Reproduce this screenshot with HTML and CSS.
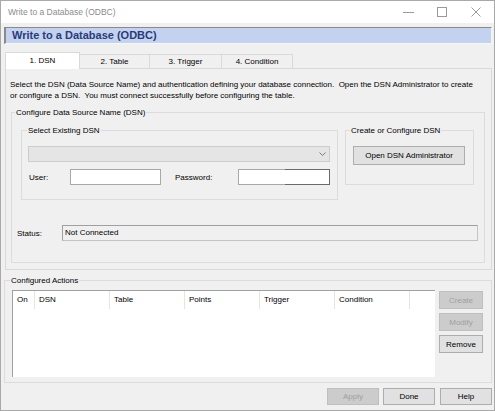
FILE: index.html
```html
<!DOCTYPE html>
<html lang="en">
<head>
<meta charset="utf-8">
<title>Write to a Database (ODBC)</title>
<link rel="stylesheet" href="styles.css">
</head>
<body>
<div class="window">
  <div class="titlebar">
    <span class="title">Write to a Database (ODBC)</span>
    <div class="controls">
      <span class="ctl"><svg width="11" height="11" viewBox="0 0 11 11"><path d="M0 5.5H11" stroke="#9a9a9a" stroke-width="1"/></svg></span>
      <span class="ctl"><svg width="10" height="10" viewBox="0 0 10 10"><rect x="0.5" y="0.5" width="9" height="9" fill="none" stroke="#9a9a9a" stroke-width="1"/></svg></span>
      <span class="ctl close"><svg width="10" height="10" viewBox="0 0 10 10"><path d="M0.5 0.5L9.5 9.5M9.5 0.5L0.5 9.5" stroke="#9a9a9a" stroke-width="1"/></svg></span>
    </div>
  </div>
  <div class="content">
    <div class="banner">Write to a Database (ODBC)</div>
    <div class="tabs">
      <div class="tab active t1">1. DSN</div>
      <div class="tab t2">2. Table</div>
      <div class="tab t3">3. Trigger</div>
      <div class="tab t4">4. Condition</div>
    </div>
    <div class="tabpage">
      <p class="desc">Select the DSN (Data Source Name) and authentication defining your database connection.&nbsp; Open the DSN Administrator to create<br>or configure a DSN.&nbsp; You must connect successfully before configuring the table.</p>
      <fieldset class="group dsn">
        <legend>Configure Data Source Name (DSN)</legend>
        <div class="groups">
          <fieldset class="group select">
            <legend>Select Existing DSN</legend>
            <div class="combo"><svg width="7" height="4" viewBox="0 0 7 4"><path d="M0.5 0.5L3.5 3.5L6.5 0.5" fill="none" stroke="#7a7a7a" stroke-width="1"/></svg></div>
            <div class="cred">
              <span class="lbl lbl-user">User:</span><span class="input user"></span>
              <span class="lbl lbl-pass">Password:</span><span class="input pass"></span>
            </div>
          </fieldset>
          <fieldset class="group create">
            <legend>Create or Configure DSN</legend>
            <button class="btn wide" type="button">Open DSN Administrator</button>
          </fieldset>
        </div>
        <div class="status-row">
          <span class="lbl lbl-status">Status:</span>
          <div class="status">Not Connected</div>
        </div>
      </fieldset>
    </div>
    <fieldset class="group actions">
      <legend>Configured Actions</legend>
      <div class="actions-body">
        <div class="list">
          <div class="list-head">
            <span class="col on">On</span>
            <span class="col">DSN</span>
            <span class="col">Table</span>
            <span class="col">Points</span>
            <span class="col">Trigger</span>
            <span class="col">Condition</span>
          </div>
        </div>
        <div class="side">
          <button class="btn small disabled" type="button">Create</button>
          <button class="btn small disabled" type="button">Modify</button>
          <button class="btn small" type="button">Remove</button>
        </div>
      </div>
    </fieldset>
    <div class="footer">
      <button class="btn foot disabled" type="button">Apply</button>
      <button class="btn foot" type="button">Done</button>
      <button class="btn foot help" type="button">Help</button>
    </div>
  </div>
</div>
</body>
</html>
```
FILE: styles.css
```css
* { box-sizing: border-box; }
html, body { margin: 0; padding: 0; }
body {
  width: 495px;
  height: 411px;
  overflow: hidden;
  background: #f0f0f0;
  font-family: "Liberation Sans", Arial, sans-serif;
  font-size: 8px;
  color: #000;
}
.window {
  width: 495px;
  height: 411px;
  border: 1px solid #a9a9a9;
  background: #f0f0f0;
  display: flex;
  flex-direction: column;
}
.titlebar {
  height: 22px;
  flex-shrink: 0;
  background: #fff;
  display: flex;
  justify-content: space-between;
  align-items: center;
}
.title {
  padding-left: 7px;
  font-size: 8.5px;
  line-height: 22px;
  color: #8c8c8c;
}
.controls { display: flex; height: 22px; }
.ctl {
  width: 33px;
  height: 22px;
  display: flex;
  align-items: center;
  justify-content: center;
}
.ctl.close { width: 36px; }
.content { padding: 4px 2px 0 3px; }
.banner {
  height: 17px;
  background: #c3d2ee;
  border-top: 1px solid #8a8a8a;
  border-left: 2px solid #8a8a8a;
  border-right: 1px solid #f4f7fc;
  border-bottom: 1px solid #f4f7fc;
  padding-left: 6px;
  font-weight: bold;
  font-size: 11px;
  line-height: 15px;
  color: #2b3a7a;
}
.tabs {
  display: flex;
  align-items: flex-end;
  margin: 8px 0 0 1px;
  height: 16px;
  position: relative;
  z-index: 1;
}
.tab {
  height: 14px;
  border: 1px solid #d9d9d9;
  border-bottom: none;
  background: #f0f0f0;
  text-align: center;
  line-height: 14px;
  margin-left: -1px;
}
.tab.t1 { width: 75px; margin-left: 0; }
.tab.t2 { width: 71px; }
.tab.t3 { width: 73px; }
.tab.t4 { width: 72px; }
.tab.active {
  height: 17px;
  margin-bottom: -1px;
  background: #fff;
  line-height: 15px;
  position: relative;
  z-index: 2;
}
.tabpage {
  margin-left: 1px;
  border: 1px solid #d9d9d9;
  background: #f0f0f0;
  padding: 10px 6px 6px 4px;
}
.desc {
  margin: 0;
  line-height: 11px;
  white-space: nowrap;
}
fieldset.group {
  margin: 0;
  min-width: 0;
  border: 1px solid #dcdcdc;
}
fieldset.group > legend {
  padding: 0 1px;
  line-height: 11px;
  font-size: 8px;
}
.dsn {
  margin: 6px 0 0 1px !important;
  padding: 7px 6px 21px 5px;
}
.dsn > legend { margin-left: -2px; }
.groups {
  display: flex;
  align-items: flex-start;
  gap: 7px;
  margin: 0 3px 0 4px;
}
.select {
  width: 317px;
  flex-shrink: 0;
  padding: 10px 7px 14px 6px;
}
.select > legend { margin-left: -1px; }
.create {
  width: 129px;
  flex-shrink: 0;
  padding: 10px 7px 19px 7px;
}
.create > legend { margin-left: -3px; }
.combo {
  height: 16px;
  background: #e5e5e5;
  border: 1px solid #cccccc;
  display: flex;
  align-items: center;
  justify-content: flex-end;
  padding-right: 3px;
}
.cred {
  display: flex;
  align-items: center;
  height: 16px;
  margin-top: 7px;
}
.lbl { line-height: 11px; }
.lbl-user { width: 41px; margin-left: 1px; }
.lbl-pass { width: 63px; margin-left: 14px; }
.input {
  height: 16px;
  background: #fff;
  border: 1px solid #a8a8a8;
}
.input.user { width: 91px; }
.input.pass { width: 92px; position: relative; }
.input.pass::after {
  content: "";
  position: absolute;
  top: -1px;
  right: -1px;
  bottom: -1px;
  width: 44px;
  border: 1px solid #6a6a6a;
  border-left: none;
}
.btn {
  font-family: "Liberation Sans", Arial, sans-serif;
  font-size: 8px;
  color: #000;
  background: #e1e1e1;
  border: 1px solid #adadad;
  padding: 0;
  margin: 0;
  border-radius: 0;
  display: flex;
  align-items: center;
  justify-content: center;
}
.btn.disabled {
  background: #cccccc;
  border-color: #bfbfbf;
  color: #a0a0a0;
}
.btn.wide { width: 112px; height: 19px; }
.status-row {
  display: flex;
  align-items: center;
  margin-top: 25px;
}
.lbl-status { width: 45px; flex-shrink: 0; }
.status {
  flex: 1;
  height: 16px;
  border: 1px solid #a0a0a0;
  border-right-color: #c4c4c4;
  border-bottom-color: #c4c4c4;
  padding-left: 2px;
  line-height: 14px;
}
.actions {
  margin-top: 5px !important;
  padding: 4px 7px 5px 7px;
}
.actions > legend { margin-left: -2px; }
.actions-body {
  display: flex;
  gap: 4px;
}
.list {
  width: 423px;
  height: 87px;
  background: #fff;
  border-top: 1px solid #a0a0a0;
  border-left: 1px solid #a0a0a0;
}
.list-head {
  display: flex;
  height: 18px;
}
.col {
  width: 75px;
  flex-shrink: 0;
  border-right: 1px solid #e5e5e5;
  padding-left: 4px;
  line-height: 18px;
}
.col.on { width: 22px; }
.side {
  display: flex;
  flex-direction: column;
  gap: 4px;
  padding-top: 1px;
}
.btn.small { width: 44px; height: 18px; }
.footer {
  display: flex;
  justify-content: flex-end;
  gap: 4px;
  margin-top: 5px;
}
.btn.foot { width: 52px; height: 17px; }
.btn.help { margin-left: 1px; }
```
